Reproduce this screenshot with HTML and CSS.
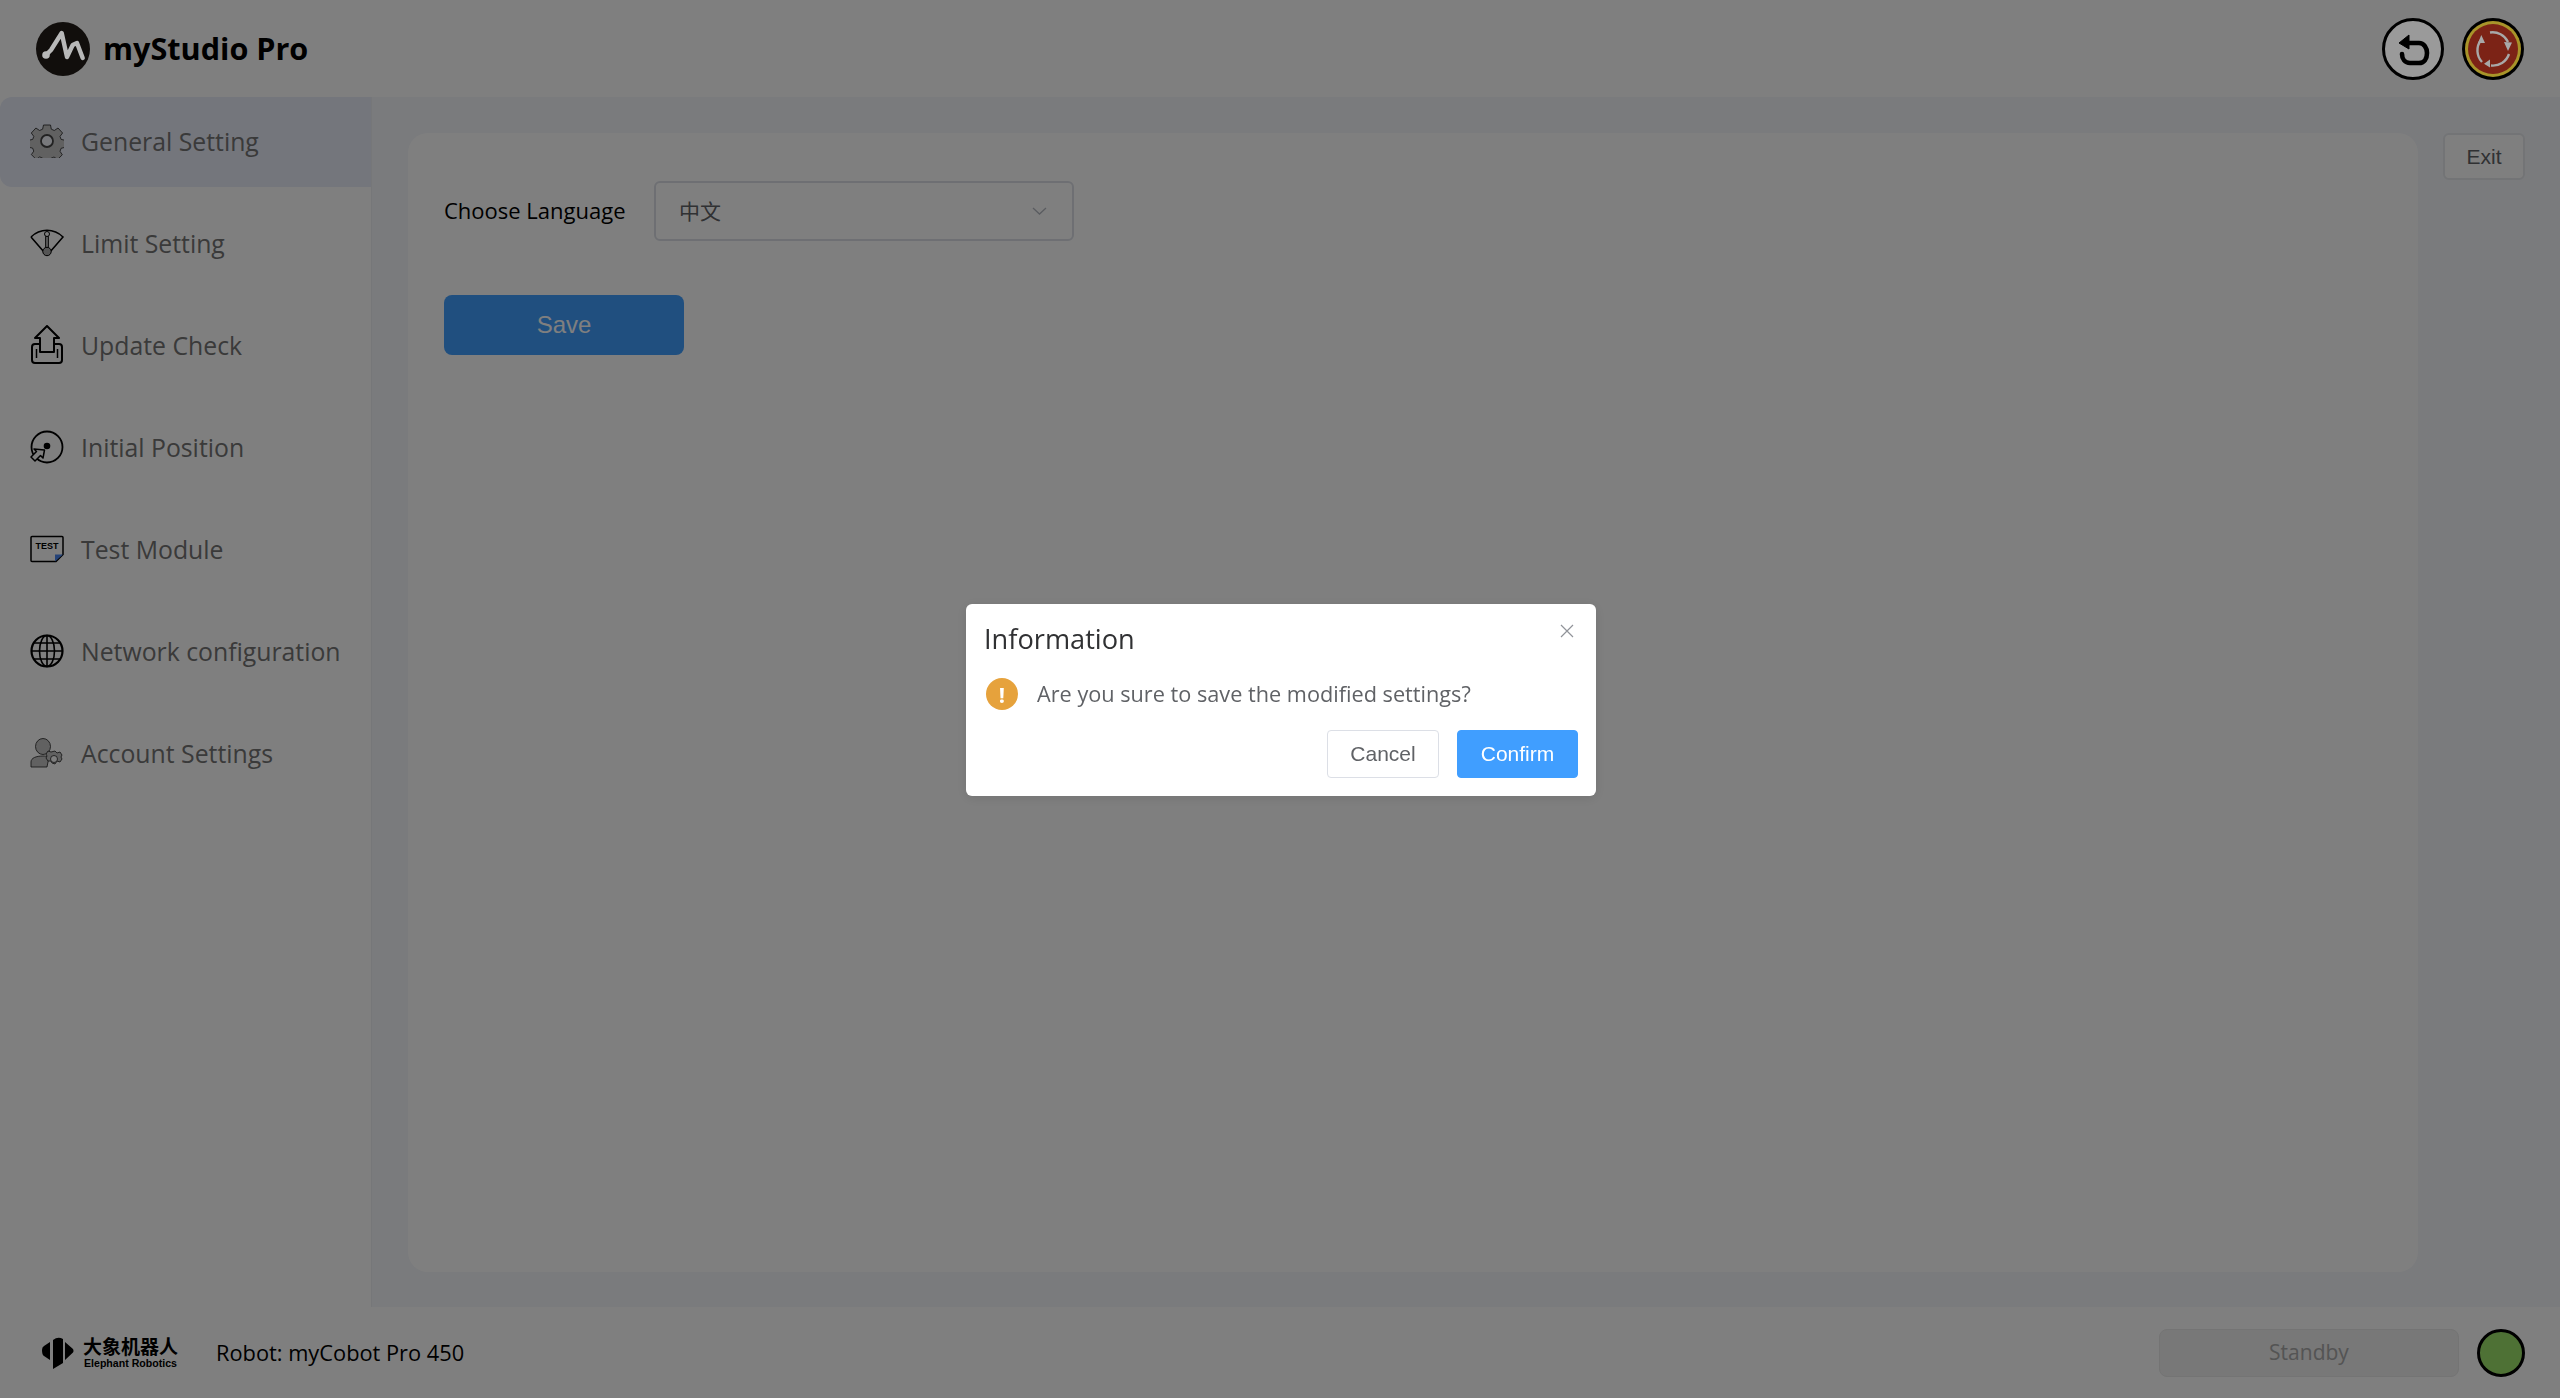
FILE: index.html
```html
<!DOCTYPE html>
<html lang="en">
<head>
<meta charset="utf-8">
<title>myStudio Pro</title>
<link rel="stylesheet" href="styles.css">
</head>
<body>
<div class="app">
  <header class="topbar">
    <div class="brand">
      <svg class="brand-logo" viewBox="0 0 54 54"><circle cx="27" cy="27" r="27" fill="#110e0c"/><path d="M10 33 L15 28 L25.7 11 L31 35 L36.7 23 L41 21 L46.7 36" fill="none" stroke="#b8b8b8" stroke-width="4.400" stroke-linejoin="round" stroke-linecap="round"/><circle cx="10" cy="33" r="3.800" fill="#b8b8b8"/></svg>
      <span class="brand-name">myStudio Pro</span>
    </div>
    <div class="top-actions">
      <button class="round-btn back-btn"><svg viewBox="0 0 62 62" width="62" height="62"><path d="M26 25 H37 C42 25 45 30 45 35 C45 41 42 45 37 45 H28 C23 45 20 41 20 36" fill="none" stroke="#000" stroke-width="4.600" stroke-linecap="round"/><path d="M17 25 L27 17 L27 31 Z" fill="#000" stroke="#000" stroke-width="1" stroke-linejoin="round"/></svg></button>
      <button class="round-btn stop-btn"><svg viewBox="0 0 62 62" width="62" height="62"><circle cx="31" cy="31" r="31" fill="#000"/><circle cx="31" cy="31" r="28" fill="#a8942a"/><circle cx="31" cy="31" r="25" fill="#7c2316"/><path d="M20 44 A17 17 0 0 1 19 22" fill="none" stroke="#a8a8a8" stroke-width="2.400"/><path d="M28 14.500 A17 17 0 0 1 46 24" fill="none" stroke="#a8a8a8" stroke-width="2.400"/><path d="M47 36 A17 17 0 0 1 29 47.500" fill="none" stroke="#a8a8a8" stroke-width="2.400"/><path d="M19.300 17 L16 25 L23 25 Z M46 33 L42 24 L50 24.500 Z M22 45.700 L28 41.500 L28 49.500 Z" fill="#a8a8a8"/></svg></button>
    </div>
  </header>
  <div class="middle">
    <nav class="sidebar">
      <a class="nav-item active"><svg class="nav-icon" viewBox="0 0 34 34"><path fill="#c2c2c2" stroke="#222" stroke-width=".8" d="M13.500 1h7l.8 4.200 3 1.300 3.700-2.500 4.600 5-2.600 3.400 1.100 3 4 .9v7l-4 1-1.100 3 2.300 3.500-4.800 4.700-3.500-2.500-3 1.300-.5 3.700h-7l-.8-3.800-3-1.300-3.500 2.500-4.800-4.800 2.400-3.500-1.200-3-3.900-.8v-7l4-.9 1.100-3-2.500-3.400 4.600-5 3.700 2.500 3-1.300z"/><circle cx="17" cy="17" r="6" fill="#f0f2f8" stroke="#444" stroke-width="1.800"/></svg><span>General Setting</span></a>
      <a class="nav-item"><svg class="nav-icon" viewBox="0 0 34 28"><path d="M1 8 C10 -1 24 -1 33 8 L20 23 M14 23 L1 8" fill="none" stroke="#000" stroke-width="1.600"/><circle cx="17" cy="5" r="2.500" fill="#fff" stroke="#000"/><path d="M15.500 7.500h3v13h-3z" fill="#aaa" stroke="#000" stroke-width=".8"/><circle cx="17" cy="22.500" r="4.200" fill="#aaa" stroke="#000"/></svg><span>Limit Setting</span></a>
      <a class="nav-item"><svg class="nav-icon tall" viewBox="0 0 34 40"><path d="M17 1 L29 13 H24 V27 H10 V13 H5 Z" fill="none" stroke="#000" stroke-width="2" stroke-linejoin="round"/><path d="M10 19 H5 Q2 19 2 22 V35 Q2 38 5 38 H29 Q32 38 32 35 V22 Q32 19 29 19 H24" fill="none" stroke="#000" stroke-width="2"/><path d="M6.500 24v9M27.500 24v9" fill="none" stroke="#000" stroke-width="1.500"/></svg><span>Update Check</span></a>
      <a class="nav-item"><svg class="nav-icon" viewBox="0 0 34 34"><circle cx="17" cy="17" r="15.500" fill="none" stroke="#000" stroke-width="1.800"/><circle cx="17" cy="16" r="3.300" fill="#000"/><path d="M14.500 20 L13 28 L10.500 25.500 L5 31 L1 27 L6.500 21.500 L4 19 Z" fill="#fff" stroke="#000" stroke-width="1.500" stroke-linejoin="round"/></svg><span>Initial Position</span></a>
      <a class="nav-item"><svg class="nav-icon" viewBox="0 0 34 27"><path d="M2 1H32Q33 1 33 2V19L26 26H2Q1 26 1 25V2Q1 1 2 1Z" fill="#fff" stroke="#000" stroke-width="1.500"/><path d="M25 26V19H33Z" fill="#4a86f0"/><text class="test-glyph" x="17" y="13">TEST</text></svg><span>Test Module</span></a>
      <a class="nav-item"><svg class="nav-icon" viewBox="0 0 34 34"><circle cx="17" cy="17" r="15.500" fill="none" stroke="#000" stroke-width="2.200"/><ellipse cx="17" cy="17" rx="7.500" ry="15.500" fill="none" stroke="#000" stroke-width="1.600"/><path d="M17 1v32M1 17h32M4 9h26M4 25h26" stroke="#000" stroke-width="1.600"/></svg><span>Network configuration</span></a>
      <a class="nav-item"><svg class="nav-icon" viewBox="0 0 34 30"><ellipse cx="13" cy="8.500" rx="7.500" ry="8" fill="#c2c2c2" stroke="#222" stroke-width=".8"/><path d="M1 29 V24 C1 20 6 18 13 18 C17 18 19 19 19 19 L17 29 Z" fill="#c2c2c2" stroke="#222" stroke-width=".8"/><path d="M25 13 l2 2 3 -1 2 3 -1 2 1 2 -2 3 -3 -1 -2 3 -3 -1 -1 -2 -3 0 -2 -3 1 -2 -1 -2 2 -3 3 1 z" fill="#c2c2c2" stroke="#222" stroke-width=".8"/><circle cx="24" cy="21" r="3.500" fill="#fff" stroke="#222" stroke-width=".8"/></svg><span>Account Settings</span></a>
    </nav>
    <main class="content">
      <section class="card">
        <div class="form-row">
          <label class="form-label">Choose Language</label>
          <div class="select"><span class="select-value">中文</span><svg class="chevron" viewBox="0 0 15 8" width="15" height="8"><path d="M1 1 L7.500 7 L14 1" fill="none" stroke="#b4b8c0" stroke-width="1.300"/></svg></div>
        </div>
        <button class="save-btn">Save</button>
      </section>
      <button class="exit-btn">Exit</button>
    </main>
  </div>
  <footer class="bottombar">
    <div class="foot-left">
      <div class="maker">
        <svg class="maker-mark" viewBox="0 0 32 32"><path d="M8 5 L2 9 Q0 10 0 13 Q0 18 2 19 L8 23 Z M11 3 Q16 -1 21 2 V26 L11 32 Z M23 5 L31 12 Q32 14 31 15.500 L23 23 Z" fill="#000"/></svg>
        <div class="maker-text"><span class="maker-cn">大象机器人</span><span class="maker-en">Elephant Robotics</span></div>
      </div>
      <span class="robot-name">Robot: myCobot Pro 450</span>
    </div>
    <div class="foot-right">
      <div class="standby">Standby</div>
      <span class="status-dot"></span>
    </div>
  </footer>
</div>
<div class="overlay"></div>
<div class="dialog">
  <div class="dialog-title">Information</div>
  <svg class="dialog-close" viewBox="0 0 14 14" width="14" height="14"><path d="M1 1 L13 13 M13 1 L1 13" stroke="#909399" stroke-width="1.200"/></svg>
  <div class="dialog-body">
    <span class="warn-icon">!</span>
    <span class="dialog-text">Are you sure to save the modified settings?</span>
  </div>
  <div class="dialog-actions">
    <button class="dlg-btn cancel">Cancel</button>
    <button class="dlg-btn confirm">Confirm</button>
  </div>
</div>
</body>
</html>
```
FILE: styles.css
```css
* { box-sizing: border-box; }
html, body { margin: 0; height: 100%; }
body { font-family: "Open Sans", "Noto Sans", sans-serif; background: #fff; overflow: hidden; }
button { font-family: inherit; cursor: pointer; }
.app { height: 1398px; display: flex; flex-direction: column; border-top: 1px solid #fff; }
.topbar { height: 96px; display: flex; align-items: center; justify-content: space-between; padding: 0 36px 0 36px; background: #fff; }
.brand { display: flex; align-items: center; gap: 13px; }
.brand-logo { width: 54px; height: 54px; display: block; position: relative; z-index: 20; }
.brand-name { font-size: 30.6px; font-weight: 700; color: #000; padding-bottom: 2px; }
.top-actions { display: flex; gap: 18px; }
.round-btn { width: 62px; height: 62px; border-radius: 50%; border: 0; padding: 0; background: none; position: relative; z-index: 20; }
.back-btn { background: #9a9a9a; border: 3px solid #000; display: flex; align-items: center; justify-content: center; }
.back-btn svg { flex: none; }
.stop-btn svg { display: block; }
.middle { height: 1210px; display: flex; background: #f4f6fa; }
.sidebar { width: 372px; background: #fff; border-right: 1px solid #eceef2; display: flex; flex-direction: column; gap: 12px; }
.nav-item { height: 90px; display: flex; align-items: center; gap: 17px; padding: 0 0 2px 30px; font-size: 24.8px; color: #747474; border-radius: 12px 0 0 12px; }
.nav-item.active { background: #e8ecf8; }
.nav-icon { width: 34px; height: 34px; flex: none; }
.nav-icon.tall { height: 40px; }
.test-glyph { font-family: "Liberation Sans", sans-serif; font-size: 9px; font-weight: 700; text-anchor: middle; fill: #000; }
.content { flex: 1; display: flex; align-items: flex-start; padding: 36px 35px 35px 36px; gap: 25px; }
.card { width: 2010px; height: 1139px; background: #fff; border-radius: 20px; padding: 48px 36px; }
.form-row { display: flex; align-items: center; height: 60px; }
.form-label { width: 210px; font-size: 22px; color: #000; padding-bottom: 2px; }
.select { width: 420px; height: 60px; border: 2px solid #dcdfe6; border-radius: 6px; display: flex; align-items: center; justify-content: space-between; padding: 0 25px 0 23px; }
.select-value { font-family: "Noto Sans CJK SC", sans-serif; font-size: 21px; color: #606266; padding-bottom: 2px; }
.save-btn { margin-top: 54px; width: 240px; height: 60px; background: #409eff; border: 0; border-radius: 8px; display: block; color: #fff; font-family: "Liberation Sans", sans-serif; font-size: 24px; padding: 0; }
.exit-btn { width: 82px; height: 47px; background: #fff; border: 2px solid #e6e8ec; border-radius: 6px; color: #606266; font-family: "Liberation Sans", sans-serif; font-size: 21px; padding: 0; }
.bottombar { flex: 1; display: flex; align-items: center; justify-content: space-between; padding: 0 35px 0 42px; background: #fff; }
.foot-left { display: flex; align-items: center; gap: 38px; }
.maker { display: flex; align-items: center; gap: 9px; }
.maker-mark { width: 32px; height: 32px; display: block; }
.maker-text { display: flex; flex-direction: column; align-items: center; gap: 3px; line-height: 1; }
.maker-cn { font-family: "Noto Sans CJK SC", sans-serif; font-weight: 700; font-size: 19px; color: #000; }
.maker-en { font-family: "Liberation Sans", sans-serif; font-weight: 700; font-size: 10.6px; color: #000; }
.robot-name { font-size: 21.8px; color: #000; padding-bottom: 1px; }
.foot-right { display: flex; align-items: center; gap: 18px; }
.standby { width: 300px; height: 48px; border: 1px solid #e8e8e8; border-radius: 8px; background: #f0f0f0; display: flex; align-items: center; justify-content: center; font-size: 21px; color: #a8a8a8; padding-bottom: 1px; }
.status-dot { width: 48px; height: 48px; border-radius: 50%; background: #4e7135; border: 3px solid #000; position: relative; z-index: 20; }
.overlay { position: fixed; inset: 0; background: rgba(0,0,0,.5); z-index: 10; }
.dialog { position: fixed; left: 966px; top: 604px; width: 630px; height: 192px; background: #fff; border-radius: 6px; z-index: 30; padding: 16px 18px 18px; display: flex; flex-direction: column; box-shadow: 0 2px 12px rgba(0,0,0,.1); }
.dialog-title { font-size: 27.2px; line-height: 38px; color: #303133; }
.dialog-close { position: absolute; right: 22px; top: 20px; }
.dialog-body { display: flex; align-items: center; gap: 19px; margin: 20px 0 0 2px; height: 32px; }
.warn-icon { width: 32px; height: 32px; border-radius: 50%; background: #e6a23c; color: #fff; font-weight: 700; font-size: 22px; display: flex; align-items: center; justify-content: center; flex: none; }
.dialog-text { font-size: 21.7px; color: #606266; padding-bottom: 2px; }
.dialog-actions { display: flex; justify-content: flex-end; gap: 18px; margin-top: auto; }
.dlg-btn { height: 48px; border-radius: 4px; font-family: "Liberation Sans", sans-serif; font-size: 21px; padding: 0; border: 1px solid #dcdfe6; }
.cancel { width: 112px; background: #fff; color: #606266; }
.confirm { width: 121px; background: #409eff; border-color: #409eff; color: #fff; }
```
